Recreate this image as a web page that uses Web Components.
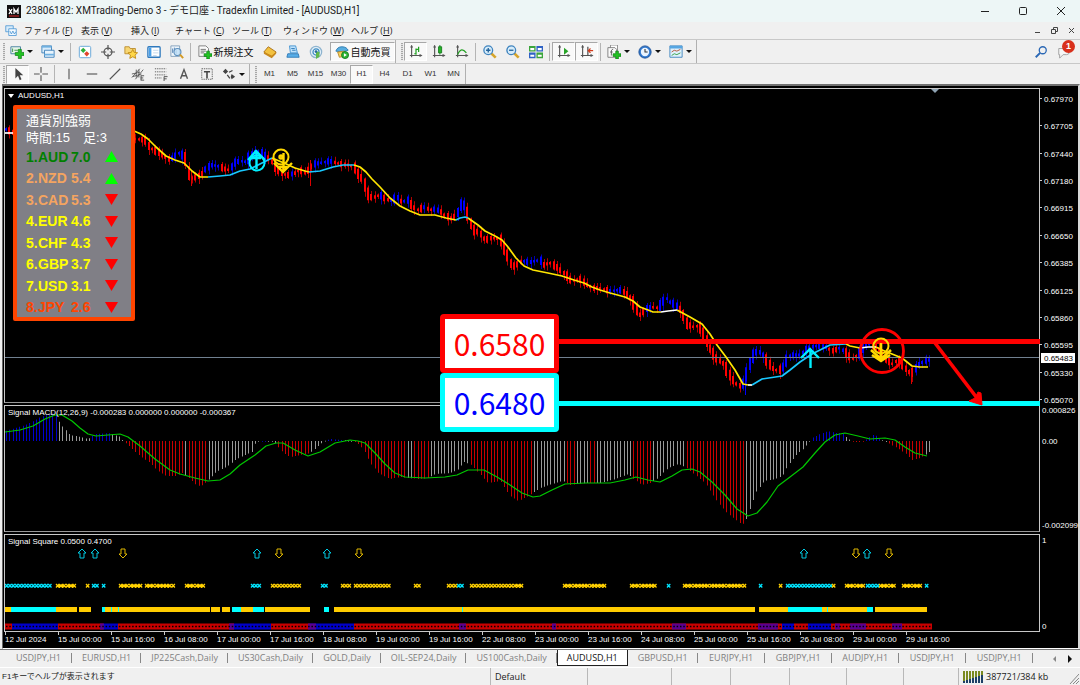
<!DOCTYPE html>
<html lang="ja">
<head>
<meta charset="utf-8">
<title>XMTrading-Demo 3 - AUDUSD,H1</title>
<style>
  html, body { margin: 0; background: #f0f0f0; }
  body { font: 9px/12px "Open Sans", "Noto Sans CJK JP", sans-serif; color: #1a1a1a; }
</style>
</head>
<body>
<mt-terminal></mt-terminal>
<script>
/* ---------- icons, 16x16 grid ---------- */
const AXES = '<path d="M3 2v12M1 12h13M2 3l1-2 1 2M12 11l2 1-2 1" fill="none" stroke="#555" stroke-width="1.3"/>';
const PLUS = '<path d="M10 7h3v3h3v3h-3v3h-3v-3H7v-3h3z" fill="#22c322" stroke="#0a7d14" stroke-width=".8"/>';
const ICONS = {
  newchart: '<path d="M1 2h11v8H1z" fill="#e8f6ea" stroke="#3c7a9a"/><path d="M3 8V4M5 6h4" stroke="#2c8a3c" fill="none"/><path d="M9.500 5h3.500v3.500h3V12h-3v3.500H9.500V12H6V8.500h3.500z" fill="#22c322" stroke="#0a7d14" stroke-width=".8"/>',
  profiles: '<path d="M1 1h11v8H1z" fill="#d9ecfb" stroke="#3b7fb8"/><path d="M1 1h11v2H1z" fill="#6fb0e0"/><path d="M4 6h11v8H4z" fill="#e8f4fd" stroke="#3b7fb8"/><path d="M4 11h11" stroke="#6fb0e0" stroke-width="2"/>',
  market: '<rect x="1.500" y="1.500" width="13" height="13" rx="1.500" fill="#fff" stroke="#5aa0d6"/><path d="M6 3l3 3-3 3-3-3z" fill="#2fae3a"/><path d="M10 7l3 3-3 3-3-3z" fill="#e2452a"/>',
  cross: '<circle cx="8" cy="8" r="4.500" fill="none" stroke="#555" stroke-width="1.400"/><path d="M8 0v6M8 10v6M0 8h6M10 8h6" stroke="#555" stroke-width="1.400"/>',
  navigator: '<path d="M1 2h5l1 2h6v6H1z" fill="#f7d673" stroke="#b98a2a"/><path d="M10 5l1.600 3.400 3.900.5-2.900 2.600.8 3.800L10 13.400l-3.400 1.900.8-3.800-2.900-2.600 3.900-.5z" fill="#ffd84a" stroke="#c08a14"/>',
  terminal: '<rect x="1" y="2" width="14" height="12" rx="1" fill="#fff" stroke="#2f79bd" stroke-width="1.500"/><path d="M2 3h3v10H2z" fill="#4aa0e8"/><path d="M7 6h6M7 9h6M7 12h4" stroke="#bcd4ea"/>',
  tester: '<path d="M1 1h10v12H1z" fill="#eef5fb" stroke="#7d9cb8"/><path d="M3 4v5M5 3v4M7 6v4" stroke="#4b7bb0"/><circle cx="8.500" cy="8" r="4" fill="#bfe0f8" fill-opacity=".8" stroke="#5d8fbd" stroke-width="1.300"/><path d="M11.500 11l3.500 4" stroke="#d39a25" stroke-width="2.200"/>',
  order: '<path d="M1 1h8l3 3v9H1z" fill="#fafafa" stroke="#777"/><path d="M3 5h6M3 7h6M3 9h4" stroke="#666"/>' + PLUS,
  gold: '<path d="M1 8l5-6 9 6-5 6z" fill="#f3c240" stroke="#a56b12"/><path d="M1 8l9 4 5-4v2l-5 5-9-5z" fill="#c98a1e"/>',
  metaq: '<path d="M4 1h7l2 8H5z" fill="#bfe2fb" stroke="#3b8fd0"/><path d="M2 10h12l1 4H1z" fill="#58aee8" stroke="#2c77b5"/><path d="M6 4h4M7 6h4" stroke="#2c77b5"/>',
  signals: '<circle cx="8" cy="8" r="6.500" fill="#e4f0f8" stroke="#8fb4cf" stroke-width="1.400"/><circle cx="8" cy="8" r="3.500" fill="none" stroke="#3f8ec4" stroke-width="1.400"/><path d="M8 7l4 1v5l-4 3z" fill="#62b84c"/><circle cx="8" cy="7.500" r="1.500" fill="#246a9b"/>',
  auto: '<path d="M1 7c1-3 3-5 7-5s6 2 7 4l-6 2z" fill="#58aee0" stroke="#2d78ad"/><path d="M3 8l8-1-1 6-5 1z" fill="#f7cf5c" stroke="#b5872a"/><circle cx="11.500" cy="11.500" r="4" fill="#2db535" stroke="#147a1d"/><path d="M10.200 9.500v4l3.300-2z" fill="#fff"/>',
  bars: AXES + '<path d="M8 4v7M8 5h3M6 10h2M11 2v6" stroke="#22a022" fill="none" stroke-width="1.400"/>',
  candles: AXES + '<path d="M9 0v11" stroke="#117a1a"/><path d="M7.500 2h3.500v7H7.500z" fill="#28b428" stroke="#117a1a"/>',
  linechart: AXES + '<path d="M3 11c3-7 6-7 10-2" stroke="#22a022" fill="none" stroke-width="1.400"/>',
  zoomin: '<path d="M9.500 9.500l5 5" stroke="#d6a52c" stroke-width="3"/><circle cx="6" cy="6" r="5" fill="#d6ecfa" stroke="#3f84bf" stroke-width="1.500"/><path d="M3.500 6h5M6 3.500v5" stroke="#23639b" stroke-width="1.500"/>',
  zoomout: '<path d="M9.500 9.500l5 5" stroke="#d6a52c" stroke-width="3"/><circle cx="6" cy="6" r="5" fill="#d6ecfa" stroke="#3f84bf" stroke-width="1.500"/><path d="M3.500 6h5" stroke="#23639b" stroke-width="1.500"/>',
  tile: '<path d="M0 1h7.500v6.500H0zM8.500 8.500H16V15H8.500z" fill="#3ba53c"/><path d="M8.500 1H16v6.500H8.500zM0 8.500h7.500V15H0z" fill="#2f62c4"/><path d="M1.500 3.500H6V6H1.500zM10 3.500h4.500V6H10zM1.500 11H6v2.500H1.500zM10 11h4.500v2.500H10z" fill="#fff"/>',
  scroll: AXES + '<path d="M8 3v8l5-4z" fill="#28a428"/>',
  shift: AXES + '<path d="M9 2v10" stroke="#444" stroke-width="1.300"/><path d="M15 6.500h-5M12 4l-2.500 2.500L12 9" stroke="#d23a1a" fill="none" stroke-width="1.400"/>',
  indicators: '<path d="M4 0h8v9H4z" fill="#fff" stroke="#888"/><path d="M1 3h8l2 2v9H1z" fill="#fafafa" stroke="#777"/><path d="M7 5c-2 0-2 1-2 3v4M3.500 8h3" stroke="#555" fill="none"/>' + PLUS,
  clock: '<circle cx="8" cy="8" r="7" fill="#2f78cf" stroke="#1c4f95"/><circle cx="8" cy="8" r="4.800" fill="#eaf4ff"/><path d="M8 4.500V8h3" stroke="#333" fill="none" stroke-width="1.200"/>',
  template: '<path d="M1 1h14v13H1z" fill="#dff0fc" stroke="#3c82bd"/><path d="M1 1h14v3H1z" fill="#56a6e2"/><path d="M3 8l3-2 3 1 4-2" stroke="#b04a2a" fill="none"/><path d="M3 12l3-2 3 1 4-2" stroke="#2c9a3c" fill="none"/>',
  cursor: '<path d="M5 1v12l3-3 2 5 2-1-2-4.500h4z" fill="#444"/>',
  plus: '<path d="M8 0v6.500M8 9.500V16M0 8h6.500M9.500 8H16" stroke="#555" stroke-width="1.300"/>',
  vline: '<path d="M8 2v12" stroke="#555" stroke-width="1.300"/>',
  hline: '<path d="M2 8h12" stroke="#555" stroke-width="1.300"/>',
  trend: '<path d="M2 14L14 2" stroke="#555" stroke-width="1.300"/>',
  channel: '<path d="M1 12L10 2M5 14l9-11M1 8l9-2M2 11l10-3M6 3v9M9 3v9" stroke="#555" fill="none"/><path d="M11 10h4M11 12.500h3M11 15h4M11.500 10v5" stroke="#444" fill="none"/>',
  fibo: '<path d="M1 2h13M1 5.500h13M1 9h13M1 12.500h8" stroke="#555" stroke-dasharray="1.500 1"/><path d="M11.500 16v-5h4M11.500 13.500h3" stroke="#444" fill="none"/>',
  textA: '<path d="M4 13.500L8 3l4 10.500M5.500 10h5" stroke="#555" fill="none" stroke-width="1.600"/>',
  textT: '<path d="M2 2h12v12H2z" stroke="#555" fill="none" stroke-dasharray="1.500 1"/><path d="M4.500 5.500h7M8 5.500V13" stroke="#444" stroke-width="1.800"/>',
  shapes: '<path d="M4 2l3 3-3 3-3-3zM11 8l4 3-4 3-1-3z" fill="#444"/><path d="M6 9l3 4M8 6l4-2" stroke="#444" stroke-width="1.500"/>',
  search: '<circle cx="10" cy="6" r="4" fill="none" stroke="#2b68b5" stroke-width="1.500"/><path d="M7 9l-5 5" stroke="#2b68b5" stroke-width="2.200"/>',
  chat: '<path d="M2 4h9a3 3 0 0 1 3 3v1a3 3 0 0 1-3 3H7l-4 4v-4H2z" fill="#f6f6f6" stroke="#999"/>',
  sheet: '<path d="M1 1h10v8H1z" fill="#d8ecfa" stroke="#3f8fd0"/><path d="M5 5h10v9H5z" fill="#f2f9ff" stroke="#3f8fd0"/><path d="M6.500 8l2 4 2-4 2 4 2-3" stroke="#3f8fd0" fill="none"/>'
};

class Base extends HTMLElement {
  constructor() { super(); this.attachShadow({ mode: 'open' }); }
  connectedCallback() { this.shadowRoot.innerHTML = this.view(); }
}
const define = (name, cls) => customElements.define(name, cls);

define('mt-icon', class extends Base {
  view() {
    return `<style>:host{display:block;width:14px;height:14px}svg{display:block;width:100%;height:100%}</style>
      <svg viewBox="0 0 16 16" aria-hidden="true">${ICONS[this.getAttribute('name')]}</svg>`;
  }
});

define('mt-tool', class extends Base {
  view() {
    const icon = this.getAttribute('icon');
    return `<style>
      :host{display:block;flex:none;height:19px}
      :host([wide][pressed]){margin-left:3px}
      button{all:unset;box-sizing:border-box;display:flex;align-items:center;height:100%;min-width:23px;padding:0 2px;justify-content:center;
        border:1px solid transparent;color:#333;font:8px/12px "Liberation Sans",sans-serif}
      :host([wide]) button{width:65px;gap:2px;font:10px/14px "Noto Sans CJK JP",sans-serif;color:#111;white-space:nowrap}
      :host([caret]) button{width:31px;gap:2px;padding:0 3px;justify-content:flex-start}
      :host([pressed]) button{background:#f9f9f9;border-color:#a8a8a8 #fff #fff #a8a8a8}
      i{border:3px solid transparent;border-top-color:#111;border-bottom:0;margin-left:1px}
      mt-icon{flex:none}
    </style><button type="button" aria-label="${this.getAttribute('label') || ''}">
      ${icon ? `<mt-icon name="${icon}"></mt-icon>` : ''}<slot></slot>${this.hasAttribute('caret') ? '<i></i>' : ''}</button>`;
  }
});

define('mt-sep', class extends Base {
  view() { return `<style>:host{display:block;flex:none;width:1px;height:18px;margin:0 2px;background:#b4b4b4}</style>`; }
});

define('mt-group', class extends Base {
  view() {
    return `<style>
      :host{display:flex;align-items:center;height:100%;box-sizing:border-box;border-right:1px solid #b0b0b0;margin-right:4px}
      b{flex:none;width:2px;height:17px;margin:0 1px;background:repeating-linear-gradient(#a8a8a8 0 1px,#e4e4e4 1px 2px)}
    </style><b></b><slot></slot>`;
  }
});

define('mt-toolbar', class extends Base {
  view() {
    return `<style>
      :host{display:flex;align-items:center;box-sizing:border-box;background:#f0f0f0;border-top:1px solid #c8c8c8;padding-left:2px}
    </style><slot></slot>`;
  }
});

define('mt-titlebar', class extends Base {
  view() {
    return `<style>
      :host{display:flex;align-items:center;height:22px;padding-left:7px;background:#edf6f6;font:10px/14px Roboto,"Noto Sans CJK JP",sans-serif}
      .logo{width:14px;height:13px;margin-right:5px}
      h1{margin:0;font:inherit;flex:1;white-space:nowrap}
      button{all:unset;width:38px;height:22px;display:grid;place-items:center}
      button svg{width:10px;height:10px}
    </style>
    <svg class="logo" viewBox="0 0 14 13"><rect width="14" height="13" fill="#111"/><path d="M2 4l3 5M5 4L2 9M7 9V4l2 3 2-3v5" stroke="#fff" fill="none" stroke-width="1.300"/><path d="M2 11h10" stroke="#d22"/></svg>
    <h1>23806182: XMTrading-Demo 3 - デモ口座 - Tradexfin Limited - [AUDUSD,H1]</h1>
    <button aria-label="最小化"><svg viewBox="0 0 10 10"><path d="M1 5.500h8" stroke="#222"/></svg></button>
    <button aria-label="最大化"><svg viewBox="0 0 10 10"><rect x="1.500" y="1.500" width="7" height="7" rx="1" fill="none" stroke="#222"/></svg></button>
    <button aria-label="閉じる"><svg viewBox="0 0 10 10"><path d="M1 1l8 8M9 1L1 9" stroke="#222"/></svg></button>`;
  }
});

define('mt-menubar', class extends Base {
  view() {
    const items = [['ファイル', 'F'], ['表示', 'V'], ['挿入', 'I'], ['チャート', 'C'], ['ツール', 'T'], ['ウィンドウ', 'W'], ['ヘルプ', 'H']];
    return `<style>
      :host{display:flex;align-items:center;height:17px;background:#f0f0f0;padding-left:5px}
      mt-icon{width:12px;height:12px;margin-right:7px}
      nav{flex:1;display:grid;grid-template-columns:57px 50px 44px 57px 51px 68px auto;justify-content:start}
      a{color:inherit;text-decoration:none;white-space:nowrap}
      button{all:unset;width:17px;height:14px;display:grid;place-items:center}
      svg{width:7px;height:7px}
    </style><mt-icon name="sheet"></mt-icon>
    <nav>${items.map(([t, k]) => `<a href="#${k}">${t} (<u>${k}</u>)</a>`).join('')}</nav>
    <button aria-label="最小化"><svg viewBox="0 0 7 7"><path d="M1 5.500h5" stroke="#444"/></svg></button>
    <button aria-label="元に戻す"><svg viewBox="0 0 7 7"><path d="M2.500 2V.5h4v4H5M.5 2.500h4v4h-4z" fill="none" stroke="#444"/></svg></button>
    <button aria-label="閉じる"><svg viewBox="0 0 7 7"><path d="M1 1l5 5M6 1L1 6" stroke="#444"/></svg></button>`;
  }
});

define('mt-alerts', class extends Base {
  view() {
    return `<style>
      :host{display:flex;align-items:center;gap:9px;margin-left:auto;padding-right:9px}
      button{all:unset;position:relative}
      span{position:absolute;left:5px;top:-5px;width:13px;height:13px;border-radius:7px;background:#d8301c;color:#fff;font:bold 9px/13px "Liberation Sans",sans-serif;text-align:center}
      mt-icon{width:14px;height:14px}
    </style><button aria-label="検索"><mt-icon name="search"></mt-icon></button>
    <button aria-label="通知"><mt-icon name="chat"></mt-icon><span>1</span></button>`;
  }
});

/* ---------- chart data: [x, y] in chart pixels ---------- */
const STEP = 3.32, FIRST = 6;
const pts = s => s.trim().split(/\s+/).map(p => p.split(',').map(Number));
const at = (list, x) => {
  for (let i = 1; i < list.length; i++) if (x <= list[i][0]) {
    const [a, b] = list[i - 1], [c, d] = list[i];
    return b + (d - b) * (x - a) / (c - a || 1);
  }
  return list[list.length - 1][1];
};
const inside = (ranges, x) => ranges.some(([a, b]) => x >= a && x < b);
const bars = [];
for (let x = FIRST; x < 930; x += STEP) bars.push(x);

const PRICE = pts(`5,129 14,133 60,136 135,139 145,140 150,148 156,151 162,155 168,159 173,158 178,153 182,155 186,160 188,172 192,178 197,177 203,173 206,168
 212,165 218,166 225,169 230,170 234,163 240,161 246,162 250,156 257,151 262,153 268,158 272,162 276,168 282,174 288,175 295,173 300,170 306,173 310,168 314,164
 320,163 330,161 340,164 348,165 354,167 358,174 363,180 367,193 372,198 380,195 386,199 392,201 397,197 402,202 408,200 412,206 418,210 424,207 430,210 435,209
 440,211 444,215 452,219 457,214 460,206 463,203 466,209 470,222 474,230 480,233 485,240 492,238 500,239 504,248 508,257 512,267 518,264 522,261 530,262 540,260
 544,265 550,263 558,268 566,275 572,281 580,279 586,284 592,288 598,288 610,291 620,290 626,293 632,300 637,310 641,316 645,309 652,307 658,308 662,303 666,298
 670,302 674,304 678,307 682,312 686,323 692,327 698,326 702,331 706,340 710,349 716,358 720,361 724,364 729,374 735,383 740,386 744,383 747,372 750,363 754,354
 758,351 762,354 767,361 772,368 778,371 784,366 788,356 794,355 800,355 806,350 814,346 820,346 826,347 832,351 840,348 846,353 852,359 858,355 864,346 870,344
 876,347 882,352 888,360 892,364 898,360 905,368 911,374 916,368 920,364 926,360`);
const UP = pts('5,8 171,185 203,219 230,265 289,294 312,333 379,383 391,398 404,408 421,426 432,438 455,465 521,541 610,621 644,652 660,678 742,765 781,828 838,843 857,871 914,930');
const MA = [
  ['#fff', '5,133 14,133'],
  ['#ffe600', '134,131 141,134 148,139 156,147 166,156 175,160 184,163 192,171 200,177 208,177'],
  ['#19c8ff', '208,177 220,176 230,175 240,171 250,169 262,163 272,158'],
  ['#ffe600', '272,158 284,163 295,168 305,171 309,172'],
  ['#19c8ff', '309,172 320,171 333,167 343,165 354,165'],
  ['#ffe600', '354,165 360,167 366,172 372,179 380,187 390,198 400,206 410,211 420,215 435,215 446,218 456,220'],
  ['#19c8ff', '456,220 460,218 465,217 468,218'],
  ['#ffe600', '468,218 478,225 485,231 495,236 502,240 508,247 516,258 524,266 533,270 548,273 562,276 574,280 584,283 592,287 600,290 610,293 625,297 633,301 640,307 648,310 653,312 661,312'],
  ['#fff', '661,312 668,311 677,310'],
  ['#ffe600', '677,310 690,317 702,324 710,334 717,345 726,357 735,370 743,384 748,385'],
  ['#fff', '748,385 752,385'],
  ['#19c8ff', '752,385 762,379 782,376 790,370 800,362 812,354 822,349 830,345 846,344'],
  ['#ffe600', '846,344 850,346 860,348'],
  ['#fff', '860,348 868,347 876,347'],
  ['#ffe600', '876,347 882,350 892,354 902,358 912,366 920,367 928,367']
];
const HIST = pts(`5,431 25,425 35,420 40,417 50,414 56,413 58,420 62,426 70,435 80,437 88,439 95,434 108,433 120,437 123,441 130,447 140,456 150,463 158,471 166,476
 175,476 182,473 190,479 197,486 203,485 209,479 216,472 228,466 235,460 245,455 252,452 256,441 273,441 283,453 290,457 300,455 310,453 317,447 324,441 330,439 342,440 352,441
 357,443 363,449 370,463 378,473 390,479 400,477 418,479 428,478 435,474 450,473 457,470 464,462 470,464 478,472 488,483 500,481 510,496 518,501 528,496 540,488
 555,483 563,481 570,485 585,483 600,483 615,479 628,474 635,480 642,485 650,483 658,478 668,468 678,464 685,467 695,475 705,483 712,494 720,505 728,514 736,520
 742,525 746,520 750,508 756,492 764,481 775,479 782,476 788,465 796,455 803,449 810,441 812,438 820,434 828,431 835,433 842,433 846,437 850,440 853,442 862,442
 865,440 868,438 874,434 878,438 882,440 888,443 897,448 905,453 912,460 920,458 925,455 929,452`);
const RED = pts('124,183 186,207 276,309 353,405 412,428 470,531 567,576 588,594 633,652 684,746 852,863 886,923');
const SIGNAL = `5,432 20,430 33,426 45,419 55,415 62,415 72,421 80,428 88,434 96,436 120,434 128,437 140,446 155,459 170,470 180,474 195,478 208,481 220,480 230,474
 240,465 255,455 266,446 276,443 283,443 295,450 308,456 320,452 335,443 350,440 358,441 365,443 375,453 385,464 395,473 405,477 425,478 445,477 457,475 468,470
 484,470 497,477 510,485 522,493 533,497 540,496 552,490 565,484 585,483 610,483 625,480 636,477 648,480 660,482 672,476 682,470 692,469 700,472 712,482 725,495
 737,509 748,516 757,513 767,502 778,486 790,477 803,467 815,453 825,442 835,435 845,433 858,436 870,439 885,438 895,440 905,447 915,453 927,456`;

function priceSvg() {
  let s = '';
  bars.forEach((x, i) => {
    const y = at(PRICE, x), slope = Math.abs(at(PRICE, x + 2) - at(PRICE, x - 2));
    const half = Math.max(1.2, Math.min(7, slope * .55 + (i * 7 % 4) * .9));
    const hi = 1 + (i * 5 % 4), lo = 1 + (i * 3 % 5), up = inside(UP, x), px = Math.round(x);
    s += `<g fill="${up ? '#0000ff' : '#ff0000'}"><path opacity=".7" d="M${px} ${(y - half - hi).toFixed(1)}h1v${(2 * half + hi + lo).toFixed(1)}h-1z"/><path d="M${px - 1} ${(y - half).toFixed(1)}h2v${(2 * half).toFixed(1)}h-2z"/></g>`;
  });
  s += '<path d="M911 370h1v14h-1zM191 170h1v16h-1zM310 160h1v26h-1z" fill="#d00"/><path d="M745 380h1v15h-1z" fill="#00f"/>';
  s += '<path d="M5 357.500H1600" stroke="#708090"/>';
  MA.forEach(([c, p]) => s += `<polyline points="${p}" fill="none" stroke="${c}" stroke-width="1.700" stroke-linejoin="round"/>`);
  return s + '<path d="M931 89h8l-4 4z" fill="#8fa3b3"/>';
}
function macdSvg() {
  const BLUE = pts('5,57 92,110 259,268 328,343 811,843 864,880');
  let s = '';
  bars.forEach(x => {
    const y = at(HIST, x), c = inside(BLUE, x) ? '#0000cc' : inside(RED, x) ? '#c80000' : '#999';
    s += `<path d="M${Math.round(x)} ${Math.min(441, y).toFixed(1)}h1v${Math.max(.8, Math.abs(y - 441)).toFixed(1)}h-1z" fill="${c}"/>`;
  });
  return s + `<polyline points="${SIGNAL}" fill="none" stroke="#00c800" stroke-width="1.200" stroke-linejoin="round"/>`;
}
function squareSvg() {
  const C = '#00e5ff', G = '#ffd000';
  let s = '';
  [82, 95, 257, 327, 804, 867].forEach(x => s += `<path d="M${x} 549l4 4h-2v5h-4v-5h-2z" fill="none" stroke="#00c8e0"/>`);
  [123, 279, 359, 856, 889].forEach(x => s += `<path d="M${x} 558l4-4h-2v-5h-4v5h-2z" fill="none" stroke="#e0b800"/>`);
  const marks = [[C, '5,53 92,100 102,106 251,262 321,328 457,464 667,671 759,763 786,832 866,879 925,929'],
    [G, '56,77 86,90 119,143 145,176 185,206 271,302 341,352 354,391 414,421 447,457 470,524 563,607 630,657 683,747 779,783 832,836 845,866 879,896 902,923']];
  marks.forEach(([c, r]) => {
    let d = '';
    pts(r).forEach(([a, b]) => { for (let x = a; x + 2 < b; x += STEP) d += `M${x.toFixed(1)} 584l3.300 3.500m0-3.500l-3.300 3.500`; });
    s += `<path d="${d}" stroke="${c}" fill="none" stroke-width="1.300"/>`;
  });
  const strip = [['#ffcc00', '5,11 56,77 79,91 105,210 211,220 222,230 241,253 265,310 334,755 759,788 822,867 875,927'],
    ['#00ffff', '11,56 102,105 111,112 118,119 232,241 253,264 324,329 462,463 788,822 827,828 867,873']];
  strip.forEach(([c, r]) => pts(r).forEach(([a, b]) => s += `<path d="M${a} 607h${b - a}v5h-${b - a}z" fill="${c}"/>`));
  const base = [['#0000c8', '12,58 103,118 234,271 310,354 782,794 808,831'], ['#c80000', '5,12 58,103 118,234 271,310 354,782 794,808 831,932'],
    ['#5a0090', '100,104 229,234 308,316 459,466 552,556 672,686 758,778 835,840 850,866 892,902']];
  base.forEach(([c, r]) => pts(r).forEach(([a, b]) => s += `<path d="M${a} 623.500h${b - a}v6h-${b - a}z" fill="${c}"/>`));
  return s + '<path d="M6 626.500H931" stroke="#000" stroke-width="1.500" stroke-dasharray="1.500 1.820"/>';
}

/* One indicator pane: plot at left, price scale at right. */
define('mt-pane', class extends Base {
  view() {
    const [draw, top] = { price: [priceSvg, 88], macd: [macdSvg, 405], square: [squareSvg, 534] }[this.getAttribute('kind')];
    return `<style>
      :host{display:grid;grid-template-columns:1fr 38px;color:#fff;font:8px/10px "Liberation Sans",sans-serif}
      .plot{position:relative;border:1px solid #c8c8c8;box-sizing:border-box;overflow:hidden;min-width:0}
      :host([kind=price]){height:317px} :host([kind=price]) .plot{margin-bottom:2px;border-bottom-color:#989898}
      :host([kind=macd]){height:129px} :host([kind=macd]) .plot{margin-bottom:2px;border-bottom-color:#989898}
      :host([kind=square]){height:98px}
      svg{position:absolute;inset:0;width:100%;height:100%}
      h2{position:relative;margin:2px 0 0 3px;font:inherit;white-space:nowrap;display:flex;align-items:center;gap:4px}
      h2 i{border:3px solid transparent;border-top:4px solid #fff;border-bottom:0}
    </style><div class="plot"><svg aria-hidden="true"><g transform="translate(-5 ${-top - 1})">${draw()}</g></svg>
      <h2>${this.getAttribute('kind') === 'price' ? '<i></i>' : ''}${this.getAttribute('label')}</h2></div><slot></slot>`;
  }
});

define('mt-scale', class extends Base {
  view() {
    const v = this.getAttribute('values').split(' ');
    return `<style>
      :host{display:grid;position:relative;padding-top:var(--top,0);padding-left:2px;grid-template-rows:var(--rows);align-content:space-between;box-sizing:border-box;color:#fff;line-height:12px}
      span{display:block;height:10px;white-space:nowrap}
      span.t::before{content:"";display:inline-block;width:2px;height:1px;background:#ccc;vertical-align:3px;margin:0 2px 0 -2px}
      mark{position:absolute;left:1px;top:265px;width:34px;height:10px;padding-left:3px;box-sizing:border-box;background:#fff;color:#000;line-height:11px}
    </style>${v.map(t => `<span class="${this.hasAttribute('ticks') ? 't' : ''}">${t}</span>`).join('')}
    ${this.hasAttribute('current') ? `<mark>${this.getAttribute('current')}</mark>` : ''}`;
  }
});

define('mt-timeline', class extends Base {
  view() {
    const t = ['12 Jul 2024', '15 Jul 00:00', '15 Jul 16:00', '16 Jul 08:00', '17 Jul 00:00', '17 Jul 16:00', '18 Jul 08:00', '19 Jul 00:00', '19 Jul 16:00', '22 Jul 08:00', '23 Jul 00:00', '23 Jul 16:00', '24 Jul 08:00', '25 Jul 00:00', '25 Jul 16:00', '26 Jul 08:00', '29 Jul 00:00', '29 Jul 16:00'];
    return `<style>
      :host{display:grid;grid-template-columns:repeat(18,53px);height:16px;color:#fff;padding-left:1px;font:8px/10px "Liberation Sans",sans-serif}
      time{white-space:nowrap}
      time::before{content:"";display:block;width:1px;height:3px;background:#ccc}
    </style>${t.map(x => `<time>${x}</time>`).join('')}`;
  }
});

define('mt-strength', class extends Base {
  view() {
    const rows = [['AUD', '7.0', '#008000', 1], ['NZD', '5.4', '#f4a460', 1], ['CAD', '5.3', '#f4a460'], ['EUR', '4.6', '#ffff00'], ['CHF', '4.3', '#ffff00'], ['GBP', '3.7', '#ffff00'], ['USD', '3.1', '#ffff00'], ['JPY', '2.6', '#ff4500']];
    return `<style>
      :host{display:block;box-sizing:border-box;width:122px;height:216px;border:4px solid #ff4500;border-radius:2px;background:#807f86;padding:3px 0 0 9px;color:#fff;font:13px/17px "Liberation Sans","Noto Sans CJK JP",sans-serif}
      p{margin:0;height:17px;white-space:pre}
      ol{list-style:none;margin:0;padding:0;display:grid;grid-template-rows:repeat(8,1fr);height:172px;font:bold 14px/16px "Liberation Sans",sans-serif}
      li{display:grid;grid-template-columns:12px 33px 34px 13px;align-items:center}
      svg{width:13px;height:11px}
    </style><p>通貨別強弱</p><p>時間:15　足:3</p>
    <ol>${rows.map(([n, v, c, up], i) => `<li style="color:${c}"><span>${i + 1}.</span><span>${n}</span><span>${v}</span><svg viewBox="0 0 13 11"><path d="${up ? 'M6.500 0L13 11H0z' : 'M0 0h13L6.500 11z'}" fill="${up ? '#00ff00' : '#ff0000'}"/></svg></li>`).join('')}</ol>`;
  }
});

define('mt-callout', class extends Base {
  view() {
    return `<style>:host{display:block;box-sizing:border-box;width:119px;height:59px;border:5px solid var(--edge);border-radius:4px;background:#fff;color:var(--ink);
      font:30px/49px "Noto Sans CJK JP",sans-serif;text-align:center}</style><slot></slot>`;
  }
});

/* Trader's drawings and entry signs laid over the panes. */
define('mt-drawings', class extends Base {
  view() {
    const line = (y, c) => `<line x1="553" x2="100%" y1="${y}" y2="${y}" stroke="${c}" stroke-width="5"/>`;
    return `<style>:host{display:block;pointer-events:none}svg{display:block;width:100%;height:100%;overflow:hidden}</style>
    <svg aria-hidden="true"><g transform="translate(-5 -88)" fill="none">
      <g stroke="#00f0ff" stroke-width="2.400"><circle cx="257" cy="163" r="7.500" stroke-width="2"/><path d="M248 160l8-9 9 9M256.500 151v18M252 158h9"/><path d="M801 358l9-9 9 9M810.500 349v19"/></g>
      <g stroke="#ffd800" stroke-width="2.400"><circle cx="281" cy="157" r="7.500" stroke-width="2"/><circle cx="281" cy="157" r="1.500"/><path d="M274 163l9 9 9-9M283.500 153v19M279 167h8"/></g>
    </g>
    ${line(253.5, '#ff0000')}${line(315.5, '#00ffff')}
    <g transform="translate(-5 -88)" fill="none">
      <g stroke="#ffd800" stroke-width="2.600"><circle cx="881" cy="346" r="7.500" stroke-width="2"/><path d="M881 343v16M871 350l10 9 10-9M872 355l9 6 9-6"/></g>
      <circle cx="882" cy="351" r="21.500" stroke="#ff0000" stroke-width="2.800"/>
      <path d="M935 343l42 55" stroke="#ff0000" stroke-width="3.600"/><path d="M982 405l-13-4 6-3 3-6 3 1z" fill="#ff0000" stroke="#ff0000"/>
    </g></svg>`;
  }
});

define('mt-chart', class extends Base {
  view() {
    return `<style>
      :host{display:block;position:relative;box-sizing:border-box;margin-left:2px;background:#000;border:1px solid #696969;border-top:2px solid #707070;border-right:2px solid #d8d8d8;border-bottom-color:#fff;padding:2px 0 0 1px}
      mt-pane[kind=price] mt-scale{--top:6px}
      mt-pane[kind=macd] mt-scale{--rows:31px 84px 10px;align-content:start}
      mt-pane[kind=square] mt-scale{--top:1px;--rows:86px 10px;align-content:start}
      mt-strength{position:absolute;left:10px;top:19px}
      mt-drawings{position:absolute;left:2px;top:2px;right:38px;height:544px}
      mt-callout{position:absolute;left:437px;top:228px;--edge:#ff0000;--ink:#ff0000}
      mt-callout+mt-callout{top:287px;--edge:#00ffff;--ink:#0000ff}
    </style>
    <mt-pane kind="price" label="AUDUSD,H1"><mt-scale ticks current="0.65483" values="0.67970 0.67705 0.67440 0.67180 0.66915 0.66650 0.66385 0.66125 0.65860 0.65595 0.65330 0.65070"></mt-scale></mt-pane>
    <mt-pane kind="macd" label="Signal MACD(12,26,9) -0.000283 0.000000 0.000000 -0.000367"><mt-scale values="0.000826 0.00 -0.002099"></mt-scale></mt-pane>
    <mt-pane kind="square" label="Signal Square 0.0500 0.4700"><mt-scale values="1 0"></mt-scale></mt-pane>
    <mt-timeline></mt-timeline>
    <mt-strength></mt-strength>
    <mt-drawings></mt-drawings>
    <mt-callout>0.6580</mt-callout><mt-callout>0.6480</mt-callout>`;
  }
});

define('mt-tabs', class extends Base {
  view() {
    const t = ['USDJPY,H1', 'EURUSD,H1', 'JP225Cash,Daily', 'US30Cash,Daily', 'GOLD,Daily', 'OIL-SEP24,Daily', 'US100Cash,Daily', 'AUDUSD,H1', 'GBPUSD,H1', 'EURJPY,H1', 'GBPJPY,H1', 'AUDJPY,H1', 'USDJPY,H1', 'USDJPY,H1'];
    return `<style>
      :host{display:flex;height:18px;background:#f0f0f0;padding-left:5px;border-top:1px solid #777;box-sizing:border-box}
      a{box-sizing:border-box;height:16px;min-width:67px;padding:0 10px;line-height:16px;text-align:center;color:#808080;text-decoration:none;white-space:nowrap;background:linear-gradient(#888,#888) right 3px/1px 10px no-repeat}
      a.on{padding:0 9px;background:#fff;color:#111;border:1px solid #222;border-top:0}
      span{margin-left:auto;display:flex;align-items:center;gap:12px;padding-right:8px}
      i{border:4px solid transparent;border-left-color:#111;border-right:0}
      i:first-child{border:3px solid transparent;border-right-color:#888;border-left:0}
    </style>${t.map((x, i) => `<a href="#${i}" class="${i === 7 ? 'on' : ''}">${x}</a>`).join('')}<span><i></i><i></i></span>`;
  }
});

define('mt-status', class extends Base {
  view() {
    let b = '';
    for (let i = 0; i < 7; i++) b += `<path d="M${i * 3} 0h2v${10 - i}h-2z" fill="#7a8a20"/><path d="M${i * 3} ${10 - i}h2V12h-2z" fill="#1c3f66"/>`;
    return `<style>
      :host{display:grid;grid-template-columns:1fr 97px 84px 59px 59px 57px 57px 55px 122px;height:18px;background:#f0f0f0;border-top:1px solid #fff;box-sizing:border-box;line-height:17px}
      div{border-left:1px solid #b8b8b8;padding-left:4px;white-space:nowrap;display:flex;align-items:center}
      div:first-of-type{border:0;padding-left:2px;font:8px/17px "Liberation Sans","Noto Sans CJK JP",sans-serif}
      svg{width:20px;height:12px;margin-right:3px}
      .grip{width:10px;height:11px;margin:3px 1px 0 auto}
    </style><div>F1キーでヘルプが表示されます</div><div>Default</div><div></div><div></div><div></div><div></div><div></div><div></div>
    <div><svg viewBox="0 0 20 12">${b}</svg>387721/384 kb<svg class="grip" viewBox="0 0 10 11"><path d="M1 11L10 1M4 11l6-6M7 11l3-3" stroke="#888"/></svg></div>`;
  }
});

define('mt-terminal', class extends Base {
  view() {
    const tool = (icon, label, extra = '') => `<mt-tool icon="${icon}" label="${label}" ${extra}></mt-tool>`;
    const frame = t => `<mt-tool label="${t}" ${t === 'H1' ? 'pressed' : ''}>${t}</mt-tool>`;
    return `<style>:host{display:block}mt-toolbar{height:24px}mt-toolbar+mt-toolbar{height:21px}</style>
    <mt-titlebar></mt-titlebar><mt-menubar></mt-menubar>
    <mt-toolbar>
      <mt-group>${tool('newchart', '新規チャート', 'caret')}${tool('profiles', '組表示', 'caret')}<mt-sep></mt-sep>
        ${tool('market', '気配値')}${tool('cross', 'データウィンドウ')}${tool('navigator', 'ナビゲーター')}${tool('terminal', 'ターミナル')}${tool('tester', 'テスター')}<mt-sep></mt-sep>
        <mt-tool wide icon="order" label="新規注文">新規注文</mt-tool>${tool('gold', 'メタエディター')}${tool('metaq', 'マーケット')}${tool('signals', 'シグナル')}<mt-tool wide pressed icon="auto" label="自動売買">自動売買</mt-tool></mt-group>
      <mt-group>${tool('bars', 'バーチャート', 'pressed')}${tool('candles', 'ローソク足')}${tool('linechart', 'ラインチャート')}<mt-sep></mt-sep>
        ${tool('zoomin', '拡大')}${tool('zoomout', '縮小')}${tool('tile', '整列')}<mt-sep></mt-sep>
        ${tool('scroll', '自動スクロール', 'pressed')}${tool('shift', 'チャートシフト', 'pressed')}<mt-sep></mt-sep>
        ${tool('indicators', 'インディケータ', 'caret')}${tool('clock', '時間足', 'caret')}${tool('template', '定型チャート', 'caret')}</mt-group>
      <mt-alerts></mt-alerts>
    </mt-toolbar>
    <mt-toolbar>
      <mt-group>${tool('cursor', 'カーソル', 'pressed')}${tool('plus', 'クロスヘア')}<mt-sep></mt-sep>
        ${tool('vline', '垂直線')}${tool('hline', '水平線')}${tool('trend', 'トレンドライン')}${tool('channel', 'チャネル')}${tool('fibo', 'フィボナッチ')}${tool('textA', 'テキスト')}${tool('textT', 'ラベル')}${tool('shapes', '矢印', 'caret')}</mt-group>
      <mt-group>${['M1', 'M5', 'M15', 'M30', 'H1', 'H4', 'D1', 'W1', 'MN'].map(frame).join('')}</mt-group>
    </mt-toolbar>
    <mt-chart></mt-chart><mt-tabs></mt-tabs><mt-status></mt-status>`;
  }
});
</script>
</body>
</html>
